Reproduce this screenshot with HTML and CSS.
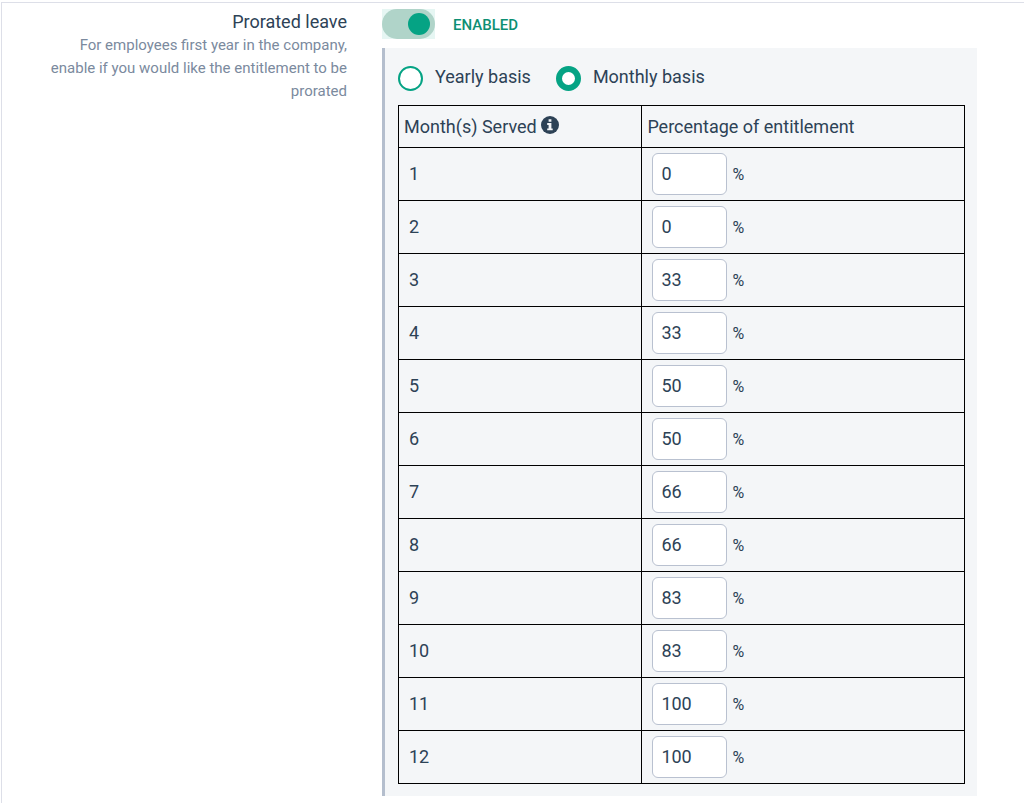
FILE: index.html
```html
<!DOCTYPE html>
<html lang="en">
  <head>
    <meta charset="UTF-8" />
    <meta name="viewport" content="width=device-width, initial-scale=1.0" />
    <title>Prorated leave</title>
    <link rel="stylesheet" href="styles.css">
  </head>
  <body>
    <form class="settings">
      <div class="setting-label">
        <label class="setting-title" for="prorated">Prorated leave</label>
        <p class="setting-help">
          For employees first year in the company, enable if you would like the
          entitlement to be prorated
        </p>
      </div>

      <div class="setting-content">
        <div class="toggle-row">
          <span class="toggle"><input type="checkbox" id="prorated" checked /></span>
          <label class="toggle-state" for="prorated">ENABLED</label>
        </div>

        <div class="panel">
          <div class="basis">
            <label><input type="radio" name="basis" value="yearly" /><span>Yearly basis</span></label>
            <label><input type="radio" name="basis" value="monthly" checked /><span>Monthly basis</span></label>
          </div>

          <table>
            <thead>
              <tr>
                <th class="months">
                  Month(s) Served
                  <svg class="info" viewBox="0 0 18 18" aria-hidden="true">
                    <circle cx="9" cy="9" r="9" fill="#2d4256" />
                    <path d="M7.6 3.2h2.8v2.6H7.6zM6.2 7h4.2v5.4h1.3v1.9H6.2v-1.9h1.4V8.9H6.2z" fill="#f4f6f8" />
                  </svg>
                </th>
                <th>Percentage of entitlement</th>
              </tr>
            </thead>
            <tbody id="rows"></tbody>
          </table>
        </div>
      </div>
    </form>

    <script>
      const percentages = [0, 0, 33, 33, 50, 50, 66, 66, 83, 83, 100, 100];
      const rows = document.getElementById("rows");

      percentages.forEach((value, i) => {
        const month = i + 1;
        const tr = document.createElement("tr");
        tr.innerHTML = `
          <td><label for="month-${month}">${month}</label></td>
          <td>
            <div class="percent">
              <input type="text" id="month-${month}" value="${value}" />
              <span>%</span>
            </div>
          </td>
        `;
        rows.appendChild(tr);
      });
    </script>
  </body>
</html>
```

FILE: styles.css
```css
* {
  box-sizing: border-box;
}

body {
  margin: 0;
  padding-top: 2px;
  min-height: 100vh;
  display: flex;
  font-family: Roboto, "Liberation Sans", sans-serif;
  font-size: 18px;
  line-height: 24px;
  color: #2d4256;
  background-color: #fff;
}

.settings {
  flex: 1;
  display: grid;
  grid-template-columns: 345fr 595fr;
  align-items: start;
  column-gap: 35px;
  padding: 6px 47px 7px 0;
  border-top: 1px solid #dddfe8;
  border-left: 1px solid #dddfe8;
  margin-left: 1px;
}

.setting-label {
  padding-left: 32px;
  text-align: right;
}

.setting-title {
  display: block;
  line-height: 25px;
}

.setting-help {
  margin: 0;
  font-size: 15px;
  line-height: 23px;
  color: #7b8a9e;
}

.toggle-row {
  display: flex;
  align-items: center;
  gap: 18px;
  height: 30px;
  margin-bottom: 9px;
}

.toggle {
  display: flex;
  background-color: #e6f6f3;
}

.toggle input {
  appearance: none;
  width: 53px;
  height: 30px;
  margin: 0;
  padding: 4px 5px;
  border-radius: 15px;
  background-color: #b0d4c9;
  display: flex;
  cursor: pointer;
}

.toggle input::before {
  content: "";
  width: 22px;
  height: 22px;
  border-radius: 50%;
  background-color: #05a384;
}

.toggle input:checked {
  justify-content: flex-end;
}

.toggle-state {
  padding-top: 2px;
  font-size: 15px;
  font-weight: 500;
  color: #0d8f73;
}

.panel {
  padding: 16px 12px 12px 13px;
  border-left: 3px solid #b4becd;
  background-color: #f4f6f8;
}

.basis {
  display: flex;
  gap: 25px;
  margin-bottom: 13px;
}

.basis label {
  display: flex;
  align-items: center;
  gap: 12px;
  height: 28px;
}

.basis span {
  margin-bottom: 3px;
}

.basis input {
  appearance: none;
  width: 25px;
  height: 25px;
  margin: 0;
  border: 2px solid #05a384;
  border-radius: 50%;
  background-color: #fff;
}

.basis input:checked {
  border-width: 6px;
}

table {
  width: 100%;
  border-collapse: collapse;
}

th,
td {
  border: 1px solid #000;
  text-align: left;
}

th {
  height: 42px;
  padding: 0 5px;
  font-weight: normal;
}

td {
  height: 53px;
  padding: 0 10px;
}

.months {
  width: 43%;
}

.info {
  width: 18px;
  height: 18px;
  vertical-align: -1px;
}

.percent {
  display: flex;
  align-items: center;
  gap: 5px;
}

.percent input {
  width: 75px;
  height: 42px;
  padding: 0 8px 2px;
  border: 1px solid #b9c1d0;
  border-radius: 6px;
  background-color: #fff;
  font: inherit;
  color: inherit;
}

.percent span {
  padding-top: 2px;
  font-size: 16px;
}
```
